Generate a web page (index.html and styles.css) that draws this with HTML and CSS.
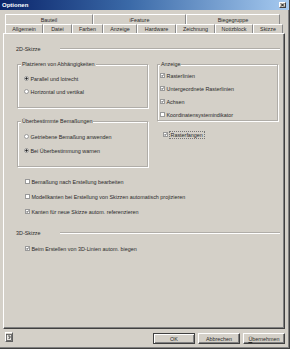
FILE: index.html
```html
<!DOCTYPE html>
<html lang="de">
<head>
<meta charset="utf-8">
<title>Optionen</title>
<link rel="stylesheet" href="styles.css">
</head>
<body>
<div class="window">
  <div class="titlebar">
    <span class="title">Optionen</span>
    <span class="close"><svg viewBox="0 0 5 4" width="5" height="4"><path d="M1 0.5 L4 3.5 M4 0.5 L1 3.5" stroke="#000" stroke-width="0.9" fill="none"/></svg></span>
  </div>

  <div class="tabs">
    <div class="tabrow back">
      <div class="tab b1">Bauteil</div>
      <div class="tab b2">iFeature</div>
      <div class="tab b3">Biegegruppe</div>
    </div>
    <div class="tabrow front">
      <div class="tab f1">Allgemein</div>
      <div class="tab f2">Datei</div>
      <div class="tab f3">Farben</div>
      <div class="tab f4">Anzeige</div>
      <div class="tab f5">Hardware</div>
      <div class="tab f6">Zeichnung</div>
      <div class="tab f7">Notizblock</div>
      <div class="tab f8 active">Skizze</div>
    </div>
  </div>

  <div class="panel">
    <div class="heading"><span class="htext">2D-Skizze</span><span class="hline"></span></div>

    <div class="cols">
      <div class="col-left">
        <fieldset class="group g-place">
          <legend>Platzieren von Abhängigkeiten</legend>
          <div class="opt"><span class="radio on"></span>Parallel und lotrecht</div>
          <div class="opt"><span class="radio"></span>Horizontal und vertikal</div>
        </fieldset>
        <fieldset class="group g-over">
          <legend>Überbestimmte Bemaßungen</legend>
          <div class="opt"><span class="radio"></span>Getriebene Bemaßung anwenden</div>
          <div class="opt"><span class="radio on"></span>Bei Überbestimmung warnen</div>
        </fieldset>
      </div>
      <div class="col-right">
        <fieldset class="group g-view">
          <legend>Anzeige</legend>
          <div class="opt"><span class="check on"><svg viewBox="0 0 6 6" width="3" height="3"><path d="M0.6 3 L2.3 4.8 L5.4 1" stroke="#000" stroke-width="1.4" fill="none"/></svg></span>Rasterlinien</div>
          <div class="opt"><span class="check on"><svg viewBox="0 0 6 6" width="3" height="3"><path d="M0.6 3 L2.3 4.8 L5.4 1" stroke="#000" stroke-width="1.4" fill="none"/></svg></span>Untergeordnete Rasterlinien</div>
          <div class="opt"><span class="check on"><svg viewBox="0 0 6 6" width="3" height="3"><path d="M0.6 3 L2.3 4.8 L5.4 1" stroke="#000" stroke-width="1.4" fill="none"/></svg></span>Achsen</div>
          <div class="opt"><span class="check"></span>Koordinatensystemindikator</div>
        </fieldset>
        <div class="opt snap"><span class="check on"><svg viewBox="0 0 6 6" width="3" height="3"><path d="M0.6 3 L2.3 4.8 L5.4 1" stroke="#000" stroke-width="1.4" fill="none"/></svg></span><span class="focus">Rasterfangen</span></div>
      </div>
    </div>

    <div class="optlist first">
      <div class="opt"><span class="check"></span>Bemaßung nach Erstellung bearbeiten</div>
      <div class="opt"><span class="check"></span>Modellkanten bei Erstellung von Skizzen automatisch projizieren</div>
      <div class="opt"><span class="check on"><svg viewBox="0 0 6 6" width="3" height="3"><path d="M0.6 3 L2.3 4.8 L5.4 1" stroke="#000" stroke-width="1.4" fill="none"/></svg></span>Kanten für neue Skizze autom. referenzieren</div>
    </div>

    <div class="heading h3d"><span class="htext">3D-Skizze</span><span class="hline"></span></div>

    <div class="optlist second">
      <div class="opt"><span class="check on"><svg viewBox="0 0 6 6" width="3" height="3"><path d="M0.6 3 L2.3 4.8 L5.4 1" stroke="#000" stroke-width="1.4" fill="none"/></svg></span>Beim Erstellen von 3D-Linien autom. biegen</div>
    </div>
  </div>

  <div class="footer">
    <span class="help"><svg viewBox="0 0 6 7" width="6" height="7"><rect x="0.5" y="0.5" width="5" height="6" fill="#e8e6e2" stroke="#555" stroke-width="0.8"/><path d="M2 2 H4 V4 H3 V5" stroke="#333" stroke-width="0.8" fill="none"/></svg></span>
    <span class="btn ok">OK</span>
    <span class="btn">Abbrechen</span>
    <span class="btn"><u>Ü</u>bernehmen</span>
  </div>
</div>
</body>
</html>
```

FILE: styles.css
```css
* { box-sizing: border-box; }

html, body {
  margin: 0;
  padding: 0;
}

body {
  width: 290px;
  height: 349px;
  overflow: hidden;
  background: #d4d0c8;
  font-family: "Liberation Sans", Arial, sans-serif;
  font-size: 5.4px;
  color: #2a2a2a;
}

.window {
  width: 290px;
  height: 349px;
  display: flex;
  flex-direction: column;
  border-right: 1px solid #404040;
  border-bottom: 1px solid #404040;
  box-shadow: inset -1px -1px 0 #808080;
}

/* title bar */
.titlebar {
  height: 10px;
  flex: none;
  display: flex;
  align-items: center;
  justify-content: space-between;
  padding: 0 3px 0 2px;
  background: linear-gradient(to right, #0a246a 0%, #3b6aa8 45%, #a6caf0 100%);
}

.title {
  color: #fff;
  font-weight: bold;
  font-size: 6px;
}

.close {
  width: 7px;
  height: 6px;
  display: flex;
  align-items: center;
  justify-content: center;
  background: #d4d0c8;
  border: 1px solid;
  border-color: #fff #404040 #404040 #fff;
}

/* tabs */
.tabs {
  flex: none;
  margin: 4px 0 0 5px;
}

.tabrow { display: flex; }
.back { height: 10px; }
.front { height: 9px; }

.tab {
  display: flex;
  align-items: center;
  justify-content: center;
  white-space: nowrap;
  border-top: 1px solid #fff;
  border-left: 1px solid #fff;
  border-right: 1px solid #8a8a8a;
}

.b1 { width: 88px; }
.b2 { width: 93px; }
.b3 { width: 94px; }
.f1 { width: 38px; }
.f2 { width: 29px; }
.f3 { width: 31px; }
.f4 { width: 34px; }
.f5 { width: 39px; }
.f6 { width: 39px; }
.f7 { width: 38px; }
.f8 { width: 30px; }

/* panel */
.panel {
  flex: 1;
  margin: 0 4px 0 3px;
  padding: 0 4px 0 12px;
  border: 1px solid;
  border-color: #fff #404040 #404040 #fff;
  box-shadow: inset -1px -1px 0 #808080;
}

.heading {
  display: flex;
  align-items: center;
  height: 7px;
  margin-top: 11px;
}

.htext { width: 44px; flex: none; }

.hline {
  flex: 1;
  height: 2px;
  border-top: 1px solid #b0ada8;
  border-bottom: 1px solid #fff;
}

.cols {
  display: flex;
  align-items: flex-start;
  margin-top: 9px;
}

.col-left {
  width: 131px;
  margin-left: 1px;
}

.col-right {
  width: 121px;
  margin-left: 9px;
}

.group {
  margin: 0;
  min-width: 0;
  border: 1px solid #b0ada8;
  box-shadow: 1px 1px 0 #fff, inset 1px 1px 0 #fff;
}

.group legend {
  padding: 0 1px;
  height: 7px;
  line-height: 7px;
  background: #d4d0c8;
  white-space: nowrap;
}

.g-place { padding: 7px 0 12px 3px; }
.g-over { padding: 8px 0 12px 3px; margin-top: 10px; }
.g-view { padding: 4px 0 2px 2px; }

.opt {
  display: flex;
  align-items: center;
  height: 7px;
  white-space: nowrap;
}

.g-place .opt { padding-left: 3px; }
.g-over .opt { padding-left: 3px; }
.g-place .opt + .opt { margin-top: 6px; }
.g-over .opt + .opt { margin-top: 7px; }
.g-view .opt + .opt { margin-top: 6px; }

.radio {
  width: 5px;
  height: 5px;
  flex: none;
  margin-right: 1.5px;
  border-radius: 50%;
  border: 1px solid #999;
  background: #fff;
}

.radio.on {
  background: radial-gradient(circle, #222 0 0.9px, #fff 1.3px);
}

.check {
  width: 5px;
  height: 5px;
  flex: none;
  margin-right: 1.5px;
  display: flex;
  align-items: center;
  justify-content: center;
  border: 1px solid #999;
  background: #fff;
}

.snap {
  margin-top: 10px;
  padding-left: 6px;
}

.focus {
  padding: 0 1px;
  outline: 1px dotted #777;
  outline-offset: 0;
}

.optlist.first {
  margin-top: 11px;
  padding-left: 9px;
}

.optlist .opt + .opt { margin-top: 8px; }

.h3d { margin-top: 14px; }

.optlist.second {
  margin-top: 9px;
  padding-left: 9px;
}

/* footer */
.footer {
  flex: none;
  height: 19px;
  display: flex;
  align-items: flex-start;
  padding: 3px 4px 0 5px;
}

.help {
  width: 8px;
  height: 10px;
  display: flex;
  align-items: center;
  justify-content: center;
  border: 1px solid;
  border-color: #fff #606060 #606060 #fff;
  margin-right: auto;
}

.btn {
  width: 42px;
  height: 11px;
  margin-top: 1px;
  margin-left: 3px;
  display: flex;
  align-items: center;
  justify-content: center;
  border: 1px solid;
  border-color: #fff #404040 #404040 #fff;
  box-shadow: inset -1px -1px 0 #808080;
}

.btn.ok {
  border-color: #404040;
  box-shadow: inset 1px 1px 0 #fff, inset -1px -1px 0 #808080;
}
```
